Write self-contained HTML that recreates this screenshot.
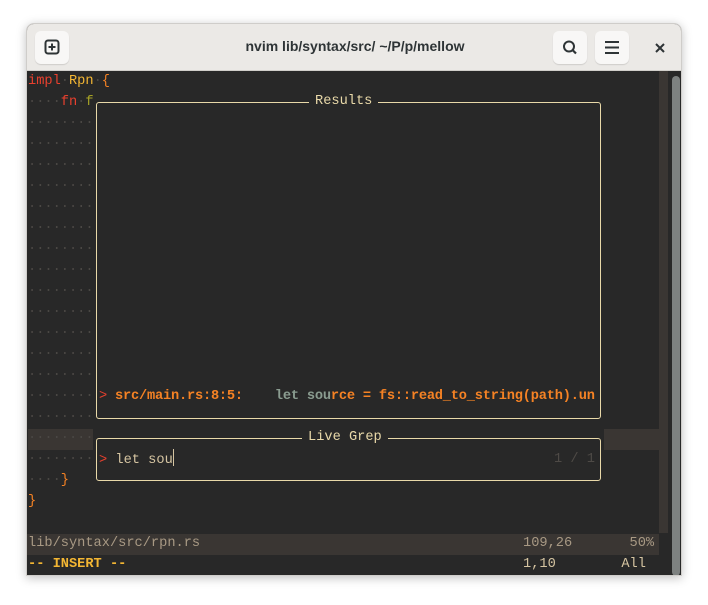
<!DOCTYPE html>
<html><head><meta charset="utf-8"><style>
*{margin:0;padding:0;box-sizing:border-box}
body{width:708px;height:605px;background:#fff;position:relative;overflow:hidden;font-family:"Liberation Sans",sans-serif}
.win{position:absolute;left:26px;top:23px;width:656px;height:553px;border-radius:8px 8px 0 0;overflow:hidden;box-shadow:0 2px 10px rgba(0,0,0,.25);border:1px solid #cfcdca;background:#282828}
.hdr{position:absolute;left:0;top:0;width:656px;height:47px;background:#ebe9e6;border-bottom:1px solid #d0ceca}
.btn{position:absolute;top:7px;width:34px;height:33px;background:#f8f7f6;border-radius:6px;box-shadow:0 1px 1px rgba(0,0,0,.12)}
.title{position:absolute;left:0;right:0;top:14px;text-align:center;font-size:14px;font-weight:bold;color:#2e3436}
.t{position:absolute;font-family:"Liberation Mono",monospace;font-size:13.67px;line-height:21px;white-space:pre;color:#d5c4a1}
.dot{color:#4a4744}
.r{color:#e8402e}.y{color:#f3b633}.o{color:#f58224}.g{color:#a6a226}
.box{position:absolute;border:1px solid #e9d9a9;border-radius:3px}
.lbl{position:absolute;background:#282828;padding:0 6px;font-family:"Liberation Mono",monospace;font-size:13.67px;line-height:16px;color:#e9d9a9}
</style></head><body>
<div class="win">
 <div class="hdr">
  <div class="btn" style="left:8px"><svg width="34" height="33" viewBox="0 0 34 33"><rect x="10.5" y="9.5" width="13" height="13" rx="2.5" fill="none" stroke="#2e3436" stroke-width="2"/><path d="M17 12.5v7M13.5 16h7" stroke="#2e3436" stroke-width="2"/></svg></div>
  <div class="title">nvim lib/syntax/src/ ~/P/p/mellow</div>
  <div class="btn" style="left:526px"><svg width="34" height="33" viewBox="0 0 34 33"><circle cx="16" cy="15.5" r="5" fill="none" stroke="#2e3436" stroke-width="2"/><path d="M19.5 19l3.5 3.5" stroke="#2e3436" stroke-width="2.2"/></svg></div>
  <div class="btn" style="left:568px"><svg width="34" height="33" viewBox="0 0 34 33"><path d="M10 11h14M10 16.5h14M10 22h14" stroke="#2e3436" stroke-width="2"/></svg></div>
  <svg style="position:absolute;left:626px;top:17px" width="14" height="14" viewBox="0 0 14 14"><path d="M3 3l8 8M11 3l-8 8" stroke="#2e3436" stroke-width="2"/></svg>
 </div>
 <div style="position:absolute;left:632px;top:47px;width:9px;height:462px;background:#3a3633"></div>
 <div style="position:absolute;left:645px;top:52px;width:8px;height:500px;background:#7d8180;border-radius:4px"></div>
 <div style="position:absolute;left:1px;top:405px;width:65px;height:21px;background:#3a3633"></div>
 <div style="position:absolute;left:577px;top:405px;width:55px;height:21px;background:#3a3633"></div>
 <div style="position:absolute;left:0;top:510px;width:632px;height:21px;background:#3a3633"></div>
 <div class="t" style="left:1px;top:47px"><span class="r">impl</span><span class="dot">·</span><span class="y">Rpn</span><span class="dot">·</span><span class="o">{</span>
<span class="dot">····</span><span class="r">fn</span><span class="dot">·</span><span class="g">f</span>
<span class="dot">········</span>
<span class="dot">········</span>
<span class="dot">········</span>
<span class="dot">········</span>
<span class="dot">········</span>
<span class="dot">········</span>
<span class="dot">········</span>
<span class="dot">········</span>
<span class="dot">········</span>
<span class="dot">········</span>
<span class="dot">········</span>
<span class="dot">········</span>
<span class="dot">········</span>
<span class="dot">········</span>
<span class="dot">········</span>
<span class="dot">········</span>
<span class="dot">········</span>
<span class="dot">····</span><span class="o">}</span>
<span class="o">}</span>
 
<span style="color:#a89984">lib/syntax/src/rpn.rs</span>
<b class="y">-- INSERT --</b></div>
 <div class="t" style="left:496px;top:509px;color:#a89984">109,26       50%</div>
 <div class="t" style="left:496px;top:530px">1,10        All</div>
 <div class="box" style="left:69px;top:78px;width:505px;height:317px;background:#282828"></div>
 <div class="lbl" style="left:282px;top:70px">Results</div>
 <div class="t" style="left:72px;top:362px;font-weight:bold;letter-spacing:-0.2px"><span class="r" style="font-weight:normal">&gt;</span> <span class="o">src/main.rs:8:5:</span>    <span style="color:#8a9c90">let sou</span><span class="o">rce = fs::read_to_string(path).un</span></div>
 <div class="box" style="left:69px;top:414px;width:505px;height:43px;background:#282828"></div>
 <div class="lbl" style="left:275px;top:406px">Live Grep</div>
 <div class="t" style="left:72px;top:425px"><span class="r">&gt;</span> let sou<span style="display:inline-block;width:1px;height:17px;background:#d5c4a1;vertical-align:-3px"></span></div>
 <div class="t" style="left:527px;top:425px;color:#4e4a46">1 / 1</div>
</div>
</body></html>
